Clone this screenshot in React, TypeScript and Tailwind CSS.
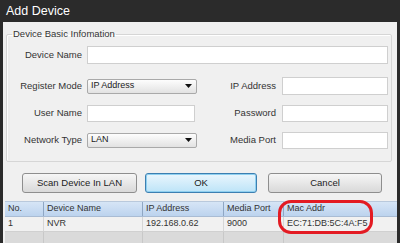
import React from 'react';

const Field: React.FC<{ w: string; h?: string }> = ({ w, h = 'h-[18px]' }) => (
  <div className={`${w} ${h} bg-white border border-[#cfcfcf]`} />
);

const Select: React.FC<{ value: string }> = ({ value }) => (
  <div className="w-[110px] h-[15px] flex items-center justify-between pl-[3px] pr-[4px] border border-[#a9a9a9] rounded-[2px] bg-gradient-to-b from-[#fdfdfd] to-[#e2e2e2] text-[9px]">
    <span>{value}</span>
    <svg width="7" height="4" viewBox="0 0 7 4">
      <path d="M0 0 H7 L3.5 4 Z" fill="#111" />
    </svg>
  </div>
);

const Label: React.FC<{ w: string; children: React.ReactNode }> = ({ w, children }) => (
  <div className={`${w} text-right text-[9.5px] text-[#333]`}>{children}</div>
);

const cols = [
  { name: 'No.', w: 'w-[38px]' },
  { name: 'Device Name', w: 'w-[99px]' },
  { name: 'IP Address', w: 'w-[81px]' },
  { name: 'Media Port', w: 'w-[60px]' },
  { name: 'Mac Addr', w: 'flex-1' },
];

const row = ['1', 'NVR', '192.168.0.62', '9000', 'EC:71:DB:5C:4A:F5'];

export default function App() {
  return (
    <div className="w-[400px] h-[243px] overflow-hidden bg-[#2b2b2b] flex flex-col font-['Liberation_Sans',Arial,sans-serif] text-[#222]">
      <div className="h-[22px] shrink-0 flex items-center pl-[6px] text-white text-[12.5px]">
        Add Device
      </div>

      <div className="flex-1 mx-[3px] bg-[#f0f0f0] relative flex flex-col">
        <fieldset className="ml-[3px] mr-[5px] mt-[6px] border border-[#d6d6d6] rounded-[2px] shadow-[inset_1px_1px_0_#fff] pt-[6px] pb-[12px]">
          <legend className="ml-[5px] px-[1px] text-[9.5px] leading-[12px] text-[#333]">
            Device Basic Infomation
          </legend>

          <div className="flex items-center h-[18px]">
            <Label w="w-[80px] pr-[5px]">Device Name</Label>
            <Field w="w-[301px]" />
          </div>

          <div className="flex items-center h-[18px] mt-[13px]">
            <Label w="w-[80px] pr-[5px]">Register Mode</Label>
            <Select value="IP Address" />
            <Label w="w-[85px] pr-[6px]">IP Address</Label>
            <Field w="w-[106px]" />
          </div>

          <div className="flex items-center h-[18px] mt-[9px]">
            <Label w="w-[80px] pr-[5px]">User Name</Label>
            <Field w="w-[108px]" h="h-[17px]" />
            <Label w="w-[87px] pr-[6px]">Password</Label>
            <Field w="w-[106px]" h="h-[17px]" />
          </div>

          <div className="flex items-center h-[18px] mt-[9px]">
            <Label w="w-[80px] pr-[5px]">Network Type</Label>
            <Select value="LAN" />
            <Label w="w-[85px] pr-[6px]">Media Port</Label>
            <Field w="w-[106px]" h="h-[17px]" />
          </div>
        </fieldset>

        <div className="flex mt-[11px] ml-[19px] text-[9.5px] text-[#222]">
          <button className="w-[115px] h-[20px] border border-[#8e8e8e] rounded-[3px] bg-gradient-to-b from-[#f6f6f6] to-[#d9d9d9]">
            Scan Device In LAN
          </button>
          <button className="ml-[8px] w-[112px] h-[20px] border border-[#3c7fb1] rounded-[3px] bg-gradient-to-b from-[#eaf6fd] to-[#bde4f8] shadow-[inset_0_0_0_1px_#8fd0f0]">
            OK
          </button>
          <button className="ml-[11px] w-[114px] h-[20px] border border-[#8e8e8e] rounded-[3px] bg-gradient-to-b from-[#f6f6f6] to-[#d9d9d9]">
            Cancel
          </button>
        </div>

        <div className="mt-[8px] ml-[2px] flex flex-col text-[9px] text-[#333] border-t border-[#b9c9dc]">
          <div className="flex h-[15px] bg-gradient-to-b from-[#d6e5f6] to-[#bcd3ee] border-b border-[#a9bcd4]">
            {cols.map((c, i) => (
              <div
                key={c.name}
                className={`${c.w} flex items-center pl-[3px] ${i > 0 ? 'border-l border-[#8fa7c4]' : ''}`}
              >
                {c.name}
              </div>
            ))}
          </div>
          <div className="flex h-[15px] bg-[#f1f1f1] border-b border-[#d0d0d0]">
            {cols.map((c, i) => (
              <div
                key={c.name}
                className={`${c.w} flex items-center pl-[3px] ${i > 0 ? 'border-l border-[#d6d6d6]' : ''}`}
              >
                {row[i]}
              </div>
            ))}
          </div>
          <div className="flex h-[15px] bg-[#dadada]">
            {cols.map((c, i) => (
              <div key={c.name} className={`${c.w} ${i > 0 ? 'border-l border-[#c8c8c8]' : ''}`} />
            ))}
          </div>
        </div>

        <div className="absolute left-[275px] top-[178px] w-[95px] h-[34px] border-[3px] border-[#e31b23] rounded-[13px]" />
      </div>
    </div>
  );
}
